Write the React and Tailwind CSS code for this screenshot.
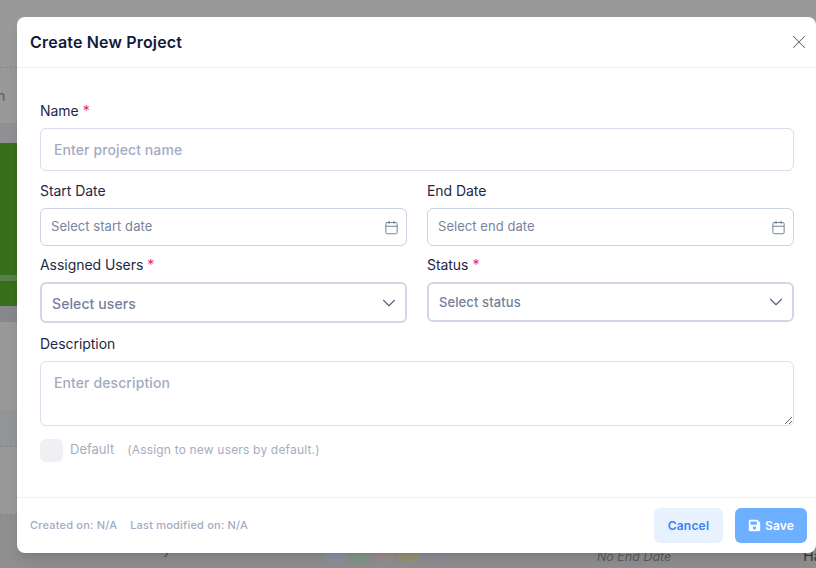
import { Calendar, ChevronDown, X } from "lucide-react";
import { FaSave } from "react-icons/fa";

function Label({ children, required }) {
  return (
    <label className="block text-[14px] leading-[20px] font-normal tracking-[-0.05px] text-[#1f2844]">
      {children}
      {required && <span className="ml-[4px] text-[#e8285c]">*</span>}
    </label>
  );
}

function DateField({ placeholder }) {
  return (
    <div className="flex h-[38px] items-center justify-between rounded-[6px] border border-[#c9d3e3] pr-[7px] pl-[10px]">
      <span className="text-[13px] tracking-[0.05px] text-[#7a849d]">{placeholder}</span>
      <Calendar size={15} strokeWidth={1.4} className="text-[#64748b]" />
    </div>
  );
}

function SelectField({ placeholder, className, textClass }) {
  return (
    <div className={`flex items-center justify-between rounded-[6px] border-2 border-[#cfd7e6] pr-[5px] pl-[10px] ${className}`}>
      <span className={`font-medium text-[#75809a] ${textClass}`}>{placeholder}</span>
      <ChevronDown size={22} strokeWidth={1.2} className="text-[#56627c]" />
    </div>
  );
}

function Page() {
  return (
    <div className="flex h-[568px] flex-col bg-[#999999]">
      <div className="h-[68px] border-b border-dashed border-[#8b8b8f]" />
      <div className="flex h-[55px] items-center text-[14px] font-medium text-[#5f6070]">
        <span className="-ml-[3px]">n</span>
      </div>
      <div className="h-[20px] bg-[#919193]" />
      <div className="h-[132px] bg-[#38701a]" />
      <div className="h-[6px] bg-[#55814a]" />
      <div className="h-[25px] bg-[#38701a]" />
      <div className="h-[16px] bg-[#88888c]" />
      <div className="h-[88px]" />
      <div className="h-[37px] border-b border-dashed border-[#88888a] bg-[#949597]" />
      <div className="h-[68px] border-b border-dashed border-[#88888a]" />
      <div className="flex flex-1 items-end bg-[#8f8f8f] pb-[5px] pl-[163px]">
        <span className="mb-[4px] text-[14px] text-[#55555a]">y</span>
        <div className="ml-[152px] flex">
          <div className="h-[27px] w-[27px] rounded-full bg-[#8b93a4]" />
          <div className="-ml-[3px] h-[27px] w-[27px] rounded-full bg-[#82998a]" />
          <div className="-ml-[3px] h-[27px] w-[27px] rounded-full bg-[#9c8d90]" />
          <div className="-ml-[3px] h-[27px] w-[27px] rounded-full bg-[#9a9378]" />
          <div className="-ml-[3px] h-[27px] w-[27px] rounded-full bg-[#908d9a]" />
          <div className="-ml-[3px] h-[27px] w-[27px] rounded-full bg-[#8f8f90]" />
        </div>
        <span className="-mb-[4px] ml-[127px] text-[12.5px] whitespace-nowrap text-[#5c5c60] italic">No End Date</span>
        <span className="-mb-[3px] ml-[132px] text-[14px] text-[#333338]">Ha</span>
      </div>
    </div>
  );
}

export default function App() {
  return (
    <div className="relative h-[568px] w-[816px] overflow-hidden font-['Inter',sans-serif]">
      <Page />

      <div className="absolute top-[17px] left-[17px] flex h-[536px] w-[799px] flex-col rounded-[8px] bg-white shadow-lg">
        <div className="flex h-[51px] items-center justify-between border-b border-[#edeff4] pr-[6px] pl-[13px]">
          <h2 className="text-[16px] font-semibold tracking-[0.17px] text-[#101b3d]">Create New Project</h2>
          <X size={22} strokeWidth={1.1} className="text-[#5f6675]" />
        </div>

        <div className="flex flex-1 flex-col pt-[33px] pr-[22px] pl-[23px]">
          <Label required>Name</Label>
          <input
            placeholder="Enter project name"
            className="mt-[7px] h-[43px] w-full rounded-[6px] border border-[#d8dcec] px-[13px] text-[14px] font-medium tracking-[0.1px] outline-none placeholder:text-[#a3abc2]"
          />

          <div className="mt-[10px] grid grid-cols-2 gap-x-[20px]">
            <div>
              <Label>Start Date</Label>
              <div className="mt-[7px]">
                <DateField placeholder="Select start date" />
              </div>
            </div>
            <div>
              <Label>End Date</Label>
              <div className="mt-[7px]">
                <DateField placeholder="Select end date" />
              </div>
            </div>
          </div>

          <div className="mt-[9px] grid grid-cols-2 gap-x-[20px]">
            <div>
              <Label required>Assigned Users</Label>
              <div className="mt-[7px]">
                <SelectField placeholder="Select users" className="h-[41px]" textClass="pt-[2px] text-[14px] tracking-[0.1px]" />
              </div>
            </div>
            <div>
              <Label required>Status</Label>
              <div className="mt-[7px]">
                <SelectField placeholder="Select status" className="h-[40px]" textClass="pt-[2px] text-[13px] tracking-[0.1px]" />
              </div>
            </div>
          </div>

          <div className="mt-[11px]">
            <Label>Description</Label>
          </div>
          <textarea
            placeholder="Enter description"
            className="mt-[7px] block h-[65px] w-full rounded-[6px] border border-[#dcdfeb] px-[13px] py-[10px] text-[14px] font-medium tracking-[0.1px] outline-none placeholder:text-[#a3abc2]"
          />

          <div className="mt-[13px] flex items-center">
            <div className="h-[23px] w-[23px] rounded-[6px] bg-[#eff0f4]" />
            <span className="mb-[2px] ml-[7px] text-[13px] text-[#a6adc0]">Default</span>
            <span className="mb-[2px] ml-[13px] text-[12px] tracking-[0.18px] text-[#a6adc0]">(Assign to new users by default.)</span>
          </div>
        </div>

        <div className="flex h-[56px] items-center justify-between border-t border-[#eef0f4] pr-[9px] pl-[13px]">
          <div className="flex gap-[13px] text-[11px] font-medium tracking-[0.2px] text-[#a3abc2]">
            <span>Created on: N/A</span>
            <span>Last modified on: N/A</span>
          </div>
          <div className="flex gap-[12px]">
            <button className="h-[35px] w-[69px] rounded-[6px] bg-[#e8f1fe] text-[12px] font-semibold tracking-[0.2px] text-[#3b82f6]">
              Cancel
            </button>
            <button className="flex h-[35px] w-[72px] items-center justify-center gap-[4px] rounded-[6px] bg-[#6cb0ff] text-[12px] font-semibold tracking-[0.2px] text-white">
              <FaSave size={13} />
              Save
            </button>
          </div>
        </div>
      </div>
    </div>
  );
}
